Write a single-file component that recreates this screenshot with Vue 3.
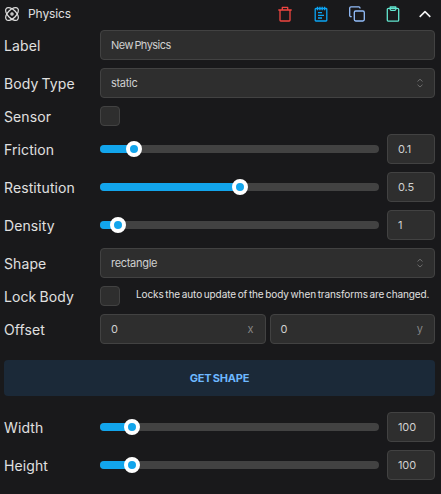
<script setup>
const sliders = {
  Friction: { fill: 12.1, value: '0.1' },
  Restitution: { fill: 50.2, value: '0.5' },
  Density: { fill: 6.4, value: '1' },
  Width: { fill: 11.4, value: '100' },
  Height: { fill: 11.4, value: '100' },
}
const rows = [
  { label: 'Label', type: 'text', value: 'New Physics' },
  { label: 'Body Type', type: 'select', value: 'static' },
  { label: 'Sensor', type: 'check' },
  { label: 'Friction', type: 'slider' },
  { label: 'Restitution', type: 'slider' },
  { label: 'Density', type: 'slider' },
  { label: 'Shape', type: 'select', value: 'rectangle' },
  { label: 'Lock Body', type: 'check', note: 'Locks the auto update of the body when transforms are changed.' },
  { label: 'Offset', type: 'vector' },
  { label: '', type: 'button' },
  { label: 'Width', type: 'slider' },
  { label: 'Height', type: 'slider' },
]
</script>

<template>
  <section class="panel">
    <header class="head">
      <svg class="atom" viewBox="0 0 16 16">
        <ellipse cx="8" cy="8" rx="8" ry="4.2" transform="rotate(45 8 8)" />
        <ellipse cx="8" cy="8" rx="8" ry="4.2" transform="rotate(-45 8 8)" />
        <circle cx="8" cy="8" r="1.1" />
      </svg>
      <h1 class="title">Physics</h1>
      <div class="tools">
        <svg class="icon red" viewBox="0 0 16 16"><path d="M1.300 4h13.400M3 4v10.200q0 .8.8.8h8.400q.8 0 .8-.8V4M5.300 4V1.300h5.400V4" /></svg>
        <svg class="icon blue" viewBox="0 0 16 16"><path d="M3 2.500h10q.8 0 .8.800v10.900q0 .8-.8.8H3q-.8 0-.8-.8V3.300q0-.8.8-.8zM4.500.8v3.400M6.900.8v3.400M9.200.8v3.400M11.600.8v3.400M5 6.700h4M5 9.300h6M5 12h4" /></svg>
        <svg class="icon light" viewBox="0 0 16 16"><rect x="5.300" y="5" width="10" height="10" rx="1.400" /><path d="M2.700 10.700H2A1.300 1.300 0 0 1 .7 9.400V2.100A1.300 1.300 0 0 1 2 .8H9.800A1.300 1.300 0 0 1 11 2v.6" /></svg>
        <svg class="icon mint" viewBox="0 0 16 16"><rect x="2.300" y="2.400" width="11.400" height="12.700" rx="1.200" /><path d="M5.200 1h5.600v2.600l-.8.800H6l-.8-.8z" /></svg>
        <svg class="icon white" viewBox="0 0 16 16"><path d="M2.700 10.800 8 5.700l5.300 5.100" /></svg>
      </div>
    </header>

    <template v-for="row in rows" :key="row.label">
      <button v-if="row.type === 'button'" class="action">GET SHAPE</button>
      <div v-else class="row" :class="row.type">
        <span class="label">{{ row.label }}</span>
        <div v-if="row.type === 'text'" class="field"><span class="val name">{{ row.value }}</span></div>
        <div v-else-if="row.type === 'select'" class="field">
          <span class="val word">{{ row.value }}</span>
          <svg class="caret" viewBox="0 0 8 10"><path d="M1.500 3.500 4 1.200l2.500 2.300M1.500 6.700 4 9l2.500-2.300" /></svg>
        </div>
        <template v-else-if="row.type === 'check'">
          <span class="box"></span>
          <span v-if="row.note" class="note">{{ row.note }}</span>
        </template>
        <template v-else-if="row.type === 'slider'">
          <div class="track">
            <div class="fill" :style="{ width: sliders[row.label].fill + '%' }"><i class="thumb"></i></div>
          </div>
          <div class="field num"><span class="val">{{ sliders[row.label].value }}</span></div>
        </template>
        <div v-else class="pair">
          <div class="field"><span class="val">0</span><span class="axis">x</span></div>
          <div class="field"><span class="val">0</span><span class="axis">y</span></div>
        </div>
      </div>
    </template>
  </section>
</template>

<style>
body { background: #19191a; }
</style>

<style scoped>
.panel {
  box-sizing: border-box;
  width: 441px;
  height: 494px;
  padding: 3px 6px 0 4px;
  display: flex;
  flex-direction: column;
  gap: 8px;
  background: #19191b;
  color: #e0e0e0;
  font-family: Inter, "Liberation Sans", sans-serif;
}
.head { display: flex; align-items: center; height: 22px; margin-bottom: -3px; flex: none; }
.atom { width: 16px; height: 16px; fill: none; stroke: #dedede; stroke-width: 1.25; overflow: visible; }
.title { margin: 0 0 0 8px; font-size: 12px; font-weight: 400; letter-spacing: -0.1px; line-height: 20px; }
.tools { display: flex; gap: 20px; margin-left: auto; margin-right: 2px; }
.icon { width: 16px; height: 16px; fill: none; stroke: currentColor; stroke-width: 1.3; stroke-linejoin: round; overflow: visible; }
.red { color: #ef4540; }
.blue { color: #0ba5f5; }
.light { color: #93bdfa; }
.mint { color: #62e6cf; }
.white { color: #f4f4f4; margin-left: -4px; stroke-width: 1.6; }
.row { display: flex; align-items: center; height: 30px; flex: none; }
.row.check { height: 20px; }
.label { width: 96px; flex: none; font-size: 14px; letter-spacing: 0.1px; word-spacing: -1px; line-height: 20px; white-space: nowrap; padding-top: 2px; box-sizing: border-box; }
.field {
  box-sizing: border-box;
  flex: 1;
  min-width: 0;
  height: 30px;
  padding: 0 11px 0 10px;
  border: 1px solid #424242;
  border-radius: 4px;
  background: #2e2e2e;
  display: flex;
  align-items: center;
  justify-content: space-between;
  font-size: 11px;
}
.val { color: #d0d0d0; letter-spacing: -0.1px; }
.name { letter-spacing: -0.55px; word-spacing: -1px; }
.word { letter-spacing: -0.3px; }
.caret { width: 8px; height: 10px; margin-right: -1px; fill: none; stroke: #6c6c6c; stroke-width: 1; }
.box { box-sizing: border-box; flex: none; width: 20px; height: 20px; border: 1px solid #424242; border-radius: 4px; background: #2e2e2e; }
.note { margin-left: 16px; font-size: 10px; letter-spacing: -0.1px; word-spacing: -1px; white-space: nowrap; padding-bottom: 4px; }
.track { width: 279px; height: 8px; border-radius: 4px; background: #424242; flex: none; }
.fill { height: 8px; border-radius: 4px 0 0 4px; background: #12a5ec; position: relative; }
.thumb { position: absolute; right: -8px; top: -4px; box-sizing: border-box; width: 16px; height: 16px; border: 4px solid #fff; border-radius: 50%; background: #12a5ec; }
.num { margin-left: 8px; }
.pair { display: flex; flex: 1; gap: 4px; }
.axis { color: #858585; font-size: 11px; }
.action {
  height: 36px;
  margin: 8px 0;
  flex: none;
  border: 0;
  border-radius: 4px;
  background: #1b2938;
  color: #6db8ff;
  font: 700 11px Inter, sans-serif;
  letter-spacing: -0.2px;
  word-spacing: -1px;
}
</style>
